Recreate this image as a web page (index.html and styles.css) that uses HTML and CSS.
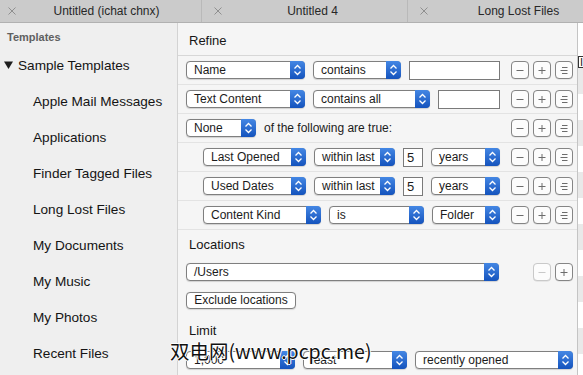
FILE: index.html
```html
<!DOCTYPE html>
<html>
<head>
<meta charset="utf-8">
<link rel="stylesheet" href="styles.css">
</head>
<body>
<div class="tabbar">
  <div class="tab"><svg class="tab-close" width="8" height="8" viewBox="0 0 8 8"><path d="M0.5 0.5L7.5 7.5M7.5 0.5L0.5 7.5"/></svg><span class="tab-title">Untitled (ichat chnx)</span></div>
  <div class="tab"><svg class="tab-close" width="8" height="8" viewBox="0 0 8 8"><path d="M0.5 0.5L7.5 7.5M7.5 0.5L0.5 7.5"/></svg><span class="tab-title">Untitled 4</span></div>
  <div class="tab"><svg class="tab-close" width="8" height="8" viewBox="0 0 8 8"><path d="M0.5 0.5L7.5 7.5M7.5 0.5L0.5 7.5"/></svg><span class="tab-title">Long Lost Files</span></div>
</div>
<div class="main">
  <aside class="sidebar">
    <div class="side-head">Templates</div>
    <div class="side-group"><svg class="disclosure" width="9" height="8" viewBox="0 0 9 8"><path d="M0 0.5H9L4.5 8Z"/></svg>Sample Templates</div>
    <ul class="side-list">
      <li>Apple Mail Messages</li>
      <li>Applications</li>
      <li>Finder Tagged Files</li>
      <li>Long Lost Files</li>
      <li>My Documents</li>
      <li>My Music</li>
      <li>My Photos</li>
      <li>Recent Files</li>
    </ul>
  </aside>
  <section class="editor">
    <div class="section-head refine">Refine</div>
    <div class="rule">
      <div class="pop w119"><span class="pop-label">Name</span><span class="pop-arrow"><svg width="9" height="12" viewBox="0 0 9 12"><path d="M1.5 4.5L4.5 1.5L7.5 4.5M1.5 7.5L4.5 10.5L7.5 7.5"/></svg></span></div>
      <div class="pop w88"><span class="pop-label">contains</span><span class="pop-arrow"><svg width="9" height="12" viewBox="0 0 9 12"><path d="M1.5 4.5L4.5 1.5L7.5 4.5M1.5 7.5L4.5 10.5L7.5 7.5"/></svg></span></div>
      <div class="field w91"></div>
      <div class="tools">
        <span class="btn"><svg width="16" height="16" viewBox="0 0 16 16"><path d="M4.5 8.5H11.5"/></svg></span>
        <span class="btn"><svg width="16" height="16" viewBox="0 0 16 16"><path d="M4.5 8.5H11.5M8 5V12"/></svg></span>
        <span class="btn"><svg width="16" height="16" viewBox="0 0 16 16"><path d="M6 5.5H11.5M4.5 8.5H11.5M6 11.5H11.5"/></svg></span>
      </div>
    </div>
    <div class="rule">
      <div class="pop w119"><span class="pop-label">Text Content</span><span class="pop-arrow"><svg width="9" height="12" viewBox="0 0 9 12"><path d="M1.5 4.5L4.5 1.5L7.5 4.5M1.5 7.5L4.5 10.5L7.5 7.5"/></svg></span></div>
      <div class="pop w117"><span class="pop-label">contains all</span><span class="pop-arrow"><svg width="9" height="12" viewBox="0 0 9 12"><path d="M1.5 4.5L4.5 1.5L7.5 4.5M1.5 7.5L4.5 10.5L7.5 7.5"/></svg></span></div>
      <div class="field w62"></div>
      <div class="tools">
        <span class="btn"><svg width="16" height="16" viewBox="0 0 16 16"><path d="M4.5 8.5H11.5"/></svg></span>
        <span class="btn"><svg width="16" height="16" viewBox="0 0 16 16"><path d="M4.5 8.5H11.5M8 5V12"/></svg></span>
        <span class="btn"><svg width="16" height="16" viewBox="0 0 16 16"><path d="M6 5.5H11.5M4.5 8.5H11.5M6 11.5H11.5"/></svg></span>
      </div>
    </div>
    <div class="rule">
      <div class="pop w70"><span class="pop-label">None</span><span class="pop-arrow"><svg width="9" height="12" viewBox="0 0 9 12"><path d="M1.5 4.5L4.5 1.5L7.5 4.5M1.5 7.5L4.5 10.5L7.5 7.5"/></svg></span></div>
      <span class="rule-text">of the following are true:</span>
      <div class="tools">
        <span class="btn"><svg width="16" height="16" viewBox="0 0 16 16"><path d="M4.5 8.5H11.5"/></svg></span>
        <span class="btn"><svg width="16" height="16" viewBox="0 0 16 16"><path d="M4.5 8.5H11.5M8 5V12"/></svg></span>
        <span class="btn"><svg width="16" height="16" viewBox="0 0 16 16"><path d="M6 5.5H11.5M4.5 8.5H11.5M6 11.5H11.5"/></svg></span>
      </div>
    </div>
    <div class="rule sub">
      <div class="pop w103"><span class="pop-label">Last Opened</span><span class="pop-arrow"><svg width="9" height="12" viewBox="0 0 9 12"><path d="M1.5 4.5L4.5 1.5L7.5 4.5M1.5 7.5L4.5 10.5L7.5 7.5"/></svg></span></div>
      <div class="pop w81"><span class="pop-label">within last</span><span class="pop-arrow"><svg width="9" height="12" viewBox="0 0 9 12"><path d="M1.5 4.5L4.5 1.5L7.5 4.5M1.5 7.5L4.5 10.5L7.5 7.5"/></svg></span></div>
      <div class="field num">5</div>
      <div class="pop w69"><span class="pop-label">years</span><span class="pop-arrow"><svg width="9" height="12" viewBox="0 0 9 12"><path d="M1.5 4.5L4.5 1.5L7.5 4.5M1.5 7.5L4.5 10.5L7.5 7.5"/></svg></span></div>
      <div class="tools">
        <span class="btn"><svg width="16" height="16" viewBox="0 0 16 16"><path d="M4.5 8.5H11.5"/></svg></span>
        <span class="btn"><svg width="16" height="16" viewBox="0 0 16 16"><path d="M4.5 8.5H11.5M8 5V12"/></svg></span>
        <span class="btn"><svg width="16" height="16" viewBox="0 0 16 16"><path d="M6 5.5H11.5M4.5 8.5H11.5M6 11.5H11.5"/></svg></span>
      </div>
    </div>
    <div class="rule sub">
      <div class="pop w103"><span class="pop-label">Used Dates</span><span class="pop-arrow"><svg width="9" height="12" viewBox="0 0 9 12"><path d="M1.5 4.5L4.5 1.5L7.5 4.5M1.5 7.5L4.5 10.5L7.5 7.5"/></svg></span></div>
      <div class="pop w81"><span class="pop-label">within last</span><span class="pop-arrow"><svg width="9" height="12" viewBox="0 0 9 12"><path d="M1.5 4.5L4.5 1.5L7.5 4.5M1.5 7.5L4.5 10.5L7.5 7.5"/></svg></span></div>
      <div class="field num">5</div>
      <div class="pop w69"><span class="pop-label">years</span><span class="pop-arrow"><svg width="9" height="12" viewBox="0 0 9 12"><path d="M1.5 4.5L4.5 1.5L7.5 4.5M1.5 7.5L4.5 10.5L7.5 7.5"/></svg></span></div>
      <div class="tools">
        <span class="btn"><svg width="16" height="16" viewBox="0 0 16 16"><path d="M4.5 8.5H11.5"/></svg></span>
        <span class="btn"><svg width="16" height="16" viewBox="0 0 16 16"><path d="M4.5 8.5H11.5M8 5V12"/></svg></span>
        <span class="btn"><svg width="16" height="16" viewBox="0 0 16 16"><path d="M6 5.5H11.5M4.5 8.5H11.5M6 11.5H11.5"/></svg></span>
      </div>
    </div>
    <div class="rule sub">
      <div class="pop w118"><span class="pop-label">Content Kind</span><span class="pop-arrow"><svg width="9" height="12" viewBox="0 0 9 12"><path d="M1.5 4.5L4.5 1.5L7.5 4.5M1.5 7.5L4.5 10.5L7.5 7.5"/></svg></span></div>
      <div class="pop w95"><span class="pop-label">is</span><span class="pop-arrow"><svg width="9" height="12" viewBox="0 0 9 12"><path d="M1.5 4.5L4.5 1.5L7.5 4.5M1.5 7.5L4.5 10.5L7.5 7.5"/></svg></span></div>
      <div class="pop w68"><span class="pop-label">Folder</span><span class="pop-arrow"><svg width="9" height="12" viewBox="0 0 9 12"><path d="M1.5 4.5L4.5 1.5L7.5 4.5M1.5 7.5L4.5 10.5L7.5 7.5"/></svg></span></div>
      <div class="tools">
        <span class="btn"><svg width="16" height="16" viewBox="0 0 16 16"><path d="M4.5 8.5H11.5"/></svg></span>
        <span class="btn"><svg width="16" height="16" viewBox="0 0 16 16"><path d="M4.5 8.5H11.5M8 5V12"/></svg></span>
        <span class="btn"><svg width="16" height="16" viewBox="0 0 16 16"><path d="M6 5.5H11.5M4.5 8.5H11.5M6 11.5H11.5"/></svg></span>
      </div>
    </div>
    <div class="section-head">Locations</div>
    <div class="ctl-row loc">
      <div class="pop w313"><span class="pop-label">/Users</span><span class="pop-arrow"><svg width="9" height="12" viewBox="0 0 9 12"><path d="M1.5 4.5L4.5 1.5L7.5 4.5M1.5 7.5L4.5 10.5L7.5 7.5"/></svg></span></div>
      <div class="tools">
        <span class="btn disabled"><svg width="16" height="16" viewBox="0 0 16 16"><path d="M4.5 8.5H11.5"/></svg></span>
        <span class="btn"><svg width="16" height="16" viewBox="0 0 16 16"><path d="M4.5 8.5H11.5M8 5V12"/></svg></span>
      </div>
    </div>
    <div class="ctl-row exclude-row">
      <span class="push">Exclude locations</span>
    </div>
    <div class="section-head limit">Limit</div>
    <div class="ctl-row limit-row">
      <div class="pop w109"><span class="pop-label">1,000</span><span class="pop-arrow"><svg width="9" height="12" viewBox="0 0 9 12"><path d="M1.5 4.5L4.5 1.5L7.5 4.5M1.5 7.5L4.5 10.5L7.5 7.5"/></svg></span></div>
      <div class="pop w104"><span class="pop-label">least</span><span class="pop-arrow"><svg width="9" height="12" viewBox="0 0 9 12"><path d="M1.5 4.5L4.5 1.5L7.5 4.5M1.5 7.5L4.5 10.5L7.5 7.5"/></svg></span></div>
      <div class="pop w158"><span class="pop-label">recently opened</span><span class="pop-arrow"><svg width="9" height="12" viewBox="0 0 9 12"><path d="M1.5 4.5L4.5 1.5L7.5 4.5M1.5 7.5L4.5 10.5L7.5 7.5"/></svg></span></div>
    </div>
  </section>
  <div class="results">
    <div class="res-field">I</div>
    <div class="res-row alt"></div>
    <div class="res-row"></div>
    <div class="res-row alt"></div>
    <div class="res-row"></div>
    <div class="res-row alt"></div>
    <div class="res-row"></div>
    <div class="res-row alt"></div>
    <div class="res-row"></div>
    <div class="res-row alt"></div>
    <div class="res-row"></div>
    <div class="res-row alt"></div>
    <div class="res-row"></div>
  </div>
</div>
<div class="watermark">双电网(www.pcpc.me)</div>
</body>
</html>
```

FILE: styles.css
```css
* { box-sizing: border-box; }

body {
  margin: 0;
  width: 583px;
  height: 375px;
  overflow: hidden;
  position: relative;
  font-family: "Liberation Sans", Arial, sans-serif;
  color: #1b1b1b;
  background: #f5f5f5;
}

/* ---------- tab bar ---------- */
.tabbar {
  display: flex;
  height: 23px;
  margin-left: -4px;
  background: #cbcbcb;
  border-bottom: 1px solid #b1b1b1;
  font-size: 12px;
  color: #272727;
}
.tab {
  flex: 0 0 206px;
  display: flex;
  align-items: center;
  padding-left: 12px;
  border-right: 1px solid #b9b9b9;
}
.tab-close {
  flex: none;
  fill: none;
  stroke: #8f8f8f;
  stroke-width: 1;
}
.tab-title {
  flex: 1;
  text-align: center;
  padding-right: 4px;
  white-space: nowrap;
}

/* ---------- layout ---------- */
.main {
  display: flex;
  height: 352px;
}

/* ---------- sidebar ---------- */
.sidebar {
  flex: 0 0 178px;
  background: #efefef;
  border-right: 1px solid #d3d3d3;
  font-size: 13.6px;
  color: #141414;
}
.side-head {
  padding: 6px 0 0 7px;
  font-size: 11px;
  font-weight: bold;
  line-height: 16px;
  color: #606060;
}
.side-group {
  margin-top: 2px;
  height: 36px;
  display: flex;
  align-items: center;
  gap: 5px;
  padding-left: 4px;
}
.disclosure { fill: #1e1e1e; }
.side-list {
  list-style: none;
  margin: 0;
  padding: 1px 0 0 33px;
}
.side-list li {
  height: 36px;
  line-height: 36px;
  white-space: nowrap;
}

/* ---------- editor ---------- */
.editor {
  flex: 0 0 399px;
  background: #f5f5f5;
  font-size: 12px;
}
.section-head {
  padding: 7px 11px 0;
  height: 22px;
  font-size: 13px;
  line-height: 16px;
  color: #161616;
}
.section-head.refine {
  height: 33px;
  padding-top: 10px;
  border-bottom: 1px solid #d7d7d7;
}
.section-head.limit { padding-top: 14px; height: 29px; }

.rule {
  height: 29px;
  display: flex;
  align-items: center;
  gap: 8px;
  padding: 0 4px 0 8px;
  border-bottom: 1px solid #e3e3e3;
}
.rule.sub { padding-left: 25px; }
.rule-text { white-space: nowrap; }

.ctl-row {
  display: flex;
  align-items: center;
  gap: 8px;
  padding: 0 4px 0 8px;
}
.loc { margin-top: 11px; height: 18px; }
.exclude-row { margin-top: 11px; height: 17px; }
.limit-row { margin-top: 13px; height: 18px; }

.tools {
  margin-left: auto;
  display: flex;
  gap: 4px;
}
.btn {
  width: 18px;
  height: 18px;
  border: 1px solid #858585;
  border-radius: 4px;
  background: #fcfcfc;
  display: flex;
  align-items: center;
  justify-content: center;
  box-shadow: 0 0.5px 0.5px rgba(0,0,0,0.12);
}
.btn svg { fill: none; stroke: #6c6c6c; stroke-width: 1; }
.btn.disabled { border-color: #c9c9c9; }
.btn.disabled svg { stroke: #c9c9c9; }

/* popup buttons */
.pop {
  flex: none;
  height: 18px;
  display: flex;
  align-items: center;
  background: #fff;
  border: 1px solid #7f7f7f;
  border-radius: 4px;
  box-shadow: 0 0.5px 1px rgba(0,0,0,0.15);
}
.pop-label {
  flex: 1;
  padding-left: 7px;
  white-space: nowrap;
  overflow: hidden;
  line-height: 16px;
}
.pop-arrow {
  flex: none;
  width: 15px;
  height: 18px;
  margin: -1px -1px -1px 0;
  border-radius: 0 4px 4px 0;
  background: linear-gradient(#4487e4, #1453bd);
  display: flex;
  align-items: center;
  justify-content: center;
}
.pop-arrow svg { fill: none; stroke: #fff; stroke-width: 1.3; }

.w68 { width: 68px; }
.w69 { width: 69px; }
.w70 { width: 70px; }
.w81 { width: 81px; }
.w88 { width: 88px; }
.w95 { width: 95px; }
.w103 { width: 103px; }
.w104 { width: 104px; }
.w109 { width: 109px; }
.w117 { width: 117px; }
.w118 { width: 118px; }
.w119 { width: 119px; }
.w158 { width: 158px; }
.w313 { width: 313px; }
.w62 { width: 62px; }
.w91 { width: 91px; }

.field {
  flex: none;
  height: 19px;
  background: #fff;
  border: 1px solid #7a7a7a;
}
.field.num {
  width: 20px;
  padding-left: 3px;
  font-size: 13px;
  line-height: 17px;
}

.push {
  width: 110px;
  height: 17px;
  border: 1px solid #7f7f7f;
  border-radius: 4px;
  background: #fff;
  text-align: center;
  line-height: 15px;
  white-space: nowrap;
  box-shadow: 0 0.5px 1px rgba(0,0,0,0.12);
}

/* ---------- results strip ---------- */
.results {
  flex: 1;
  border-left: 1px solid #c4c4c4;
  background: #fff;
  padding-top: 33px;
}
.res-field {
  height: 12px;
  border: 1px solid #333;
  border-right: none;
  font-size: 11px;
  line-height: 10px;
  padding-left: 1px;
}
.res-row { height: 26px; }
.res-row.alt { background: #e9e9e9; }

/* ---------- watermark ---------- */
.watermark {
  position: absolute;
  left: 170px;
  top: 339px;
  font-family: "Noto Sans CJK SC", sans-serif;
  font-size: 19.5px;
  line-height: 24px;
  color: #111;
  white-space: nowrap;
  text-shadow: 1px 0 0 #fff, -1px 0 0 #fff, 0 1px 0 #fff, 0 -1px 0 #fff;
}
```
